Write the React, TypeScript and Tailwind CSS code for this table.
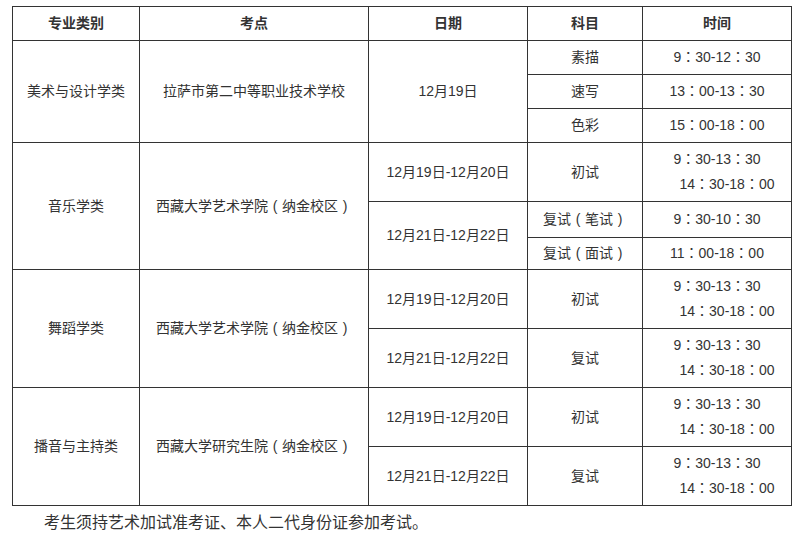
const font = "font-['Liberation_Sans','Noto_Sans_CJK_SC',sans-serif]";
// TC punctuation puts the full-width colon in the middle of its box, like the reference
const tc = "font-['Liberation_Sans','Noto_Sans_CJK_TC',sans-serif]";

const td = 'border border-[#333] text-center align-middle p-0 whitespace-nowrap';
const tt = `${td} ${tc}`;

// full-width bracket drawn centred in a 1em box
function P({ children }: { children: string }) {
  return <span className="inline-block w-[1em] text-center">{children}</span>;
}

function TwoLines({ a, b }: { a: string; b: string }) {
  return (
    <div className="leading-[25px]">
      <div>{a}</div>
      <div className="pl-[20px]">{b}</div>
    </div>
  );
}

export default function App() {
  return (
    <div className={`w-[797px] h-[539px] bg-white text-[#333] text-[14px] ${font}`}>
      <div className="pt-[6px] pl-[12px]">
        <table className="w-[780px] table-fixed border-collapse">
          <colgroup>
            <col className="w-[127px]" />
            <col className="w-[229px]" />
            <col className="w-[159px]" />
            <col className="w-[115px]" />
            <col className="w-[149px]" />
          </colgroup>
          <thead>
            <tr className="h-[34px] font-bold">
              <th className={td}>专业类别</th>
              <th className={td}>考点</th>
              <th className={td}>日期</th>
              <th className={td}>科目</th>
              <th className={td}>时间</th>
            </tr>
          </thead>
          <tbody>
            <tr className="h-[34px]">
              <td className={td} rowSpan={3}>美术与设计学类</td>
              <td className={td} rowSpan={3}>拉萨市第二中等职业技术学校</td>
              <td className={td} rowSpan={3}>12月19日</td>
              <td className={td}>素描</td>
              <td className={tt}>9：30-12：30</td>
            </tr>
            <tr className="h-[34px]">
              <td className={td}>速写</td>
              <td className={tt}>13：00-13：30</td>
            </tr>
            <tr className="h-[34px]">
              <td className={td}>色彩</td>
              <td className={tt}>15：00-18：00</td>
            </tr>

            <tr className="h-[59px]">
              <td className={td} rowSpan={3}>音乐学类</td>
              <td className={td} rowSpan={3}>西藏大学艺术学院<P>(</P>纳金校区<P>)</P></td>
              <td className={td}>12月19日-12月20日</td>
              <td className={td}>初试</td>
              <td className={tt}><TwoLines a="9：30-13：30" b="14：30-18：00" /></td>
            </tr>
            <tr className="h-[36px]">
              <td className={td} rowSpan={2}>12月21日-12月22日</td>
              <td className={td}>复试<P>(</P>笔试<P>)</P></td>
              <td className={tt}>9：30-10：30</td>
            </tr>
            <tr className="h-[32px]">
              <td className={td}>复试<P>(</P>面试<P>)</P></td>
              <td className={tt}>11：00-18：00</td>
            </tr>

            <tr className="h-[59px]">
              <td className={td} rowSpan={2}>舞蹈学类</td>
              <td className={td} rowSpan={2}>西藏大学艺术学院<P>(</P>纳金校区<P>)</P></td>
              <td className={td}>12月19日-12月20日</td>
              <td className={td}>初试</td>
              <td className={tt}><TwoLines a="9：30-13：30" b="14：30-18：00" /></td>
            </tr>
            <tr className="h-[59px]">
              <td className={td}>12月21日-12月22日</td>
              <td className={td}>复试</td>
              <td className={tt}><TwoLines a="9：30-13：30" b="14：30-18：00" /></td>
            </tr>

            <tr className="h-[59px]">
              <td className={td} rowSpan={2}>播音与主持类</td>
              <td className={td} rowSpan={2}>西藏大学研究生院<P>(</P>纳金校区<P>)</P></td>
              <td className={td}>12月19日-12月20日</td>
              <td className={td}>初试</td>
              <td className={tt}><TwoLines a="9：30-13：30" b="14：30-18：00" /></td>
            </tr>
            <tr className="h-[59px]">
              <td className={td}>12月21日-12月22日</td>
              <td className={td}>复试</td>
              <td className={tt}><TwoLines a="9：30-13：30" b="14：30-18：00" /></td>
            </tr>
          </tbody>
        </table>
        <p className="mt-[5px] text-[16px] leading-[24px] indent-[32px]">
          考生须持艺术加试准考证、本人二代身份证参加考试。
        </p>
      </div>
    </div>
  );
}
